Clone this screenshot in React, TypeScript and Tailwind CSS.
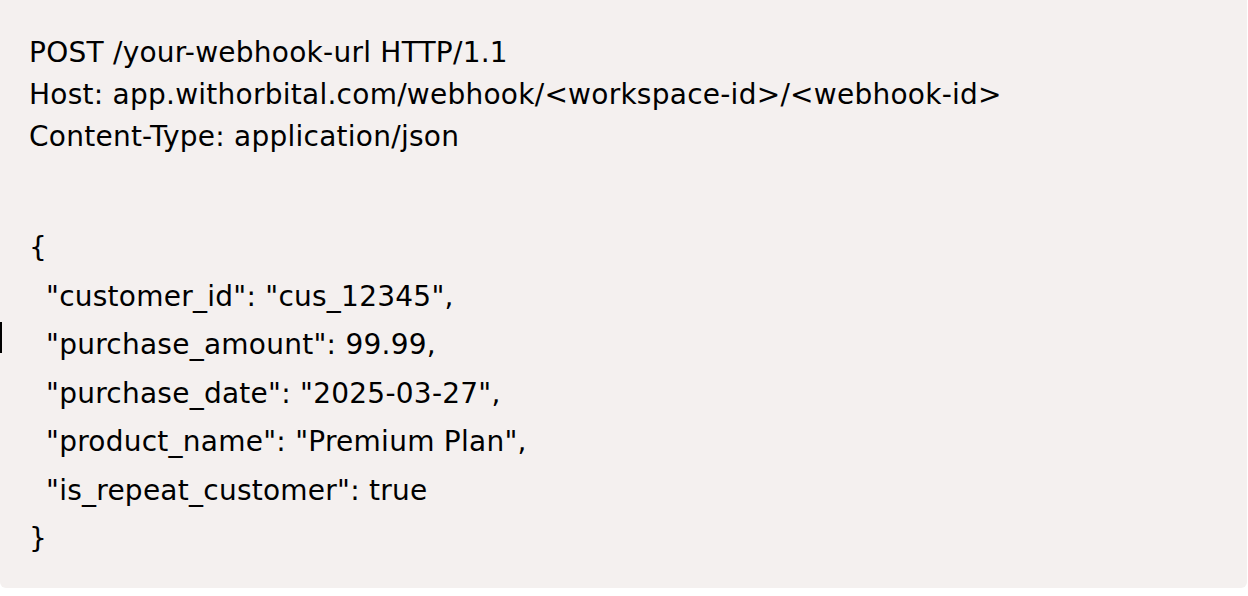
const lines = [
  "POST /your-webhook-url HTTP/1.1",
  "Host: app.withorbital.com/webhook/<workspace-id>/<webhook-id>",
  "Content-Type: application/json",
]

const fields = [
  '"customer_id": "cus_12345",',
  '"purchase_amount": 99.99,',
  '"purchase_date": "2025-03-27",',
  '"product_name": "Premium Plan",',
  '"is_repeat_customer": true',
]

export default function App() {
  return (
    <div className="w-[1248px] h-[596px] bg-white">
      <div className="relative w-[1247px] h-[588px] bg-[#f4f0ef] rounded-b-md pl-[29px] pt-[32px] text-black font-['DejaVu_Sans',sans-serif] text-[28px] tracking-[0.25px]">
        <span className="absolute left-0 top-[322px] w-[2px] h-[31px] bg-black" />
        <div className="flex flex-col leading-[42px]">
          {lines.map((l, i) => (
            <div key={i} className="whitespace-pre">{l}</div>
          ))}
        </div>
        <div className="mt-[66px] flex flex-col leading-[48.5px]">
          <div>{"{"}</div>
          {fields.map((l, i) => (
            <div key={i} className="pl-[17px] whitespace-pre">{l}</div>
          ))}
          <div>{"}"}</div>
        </div>
      </div>
    </div>
  )
}
